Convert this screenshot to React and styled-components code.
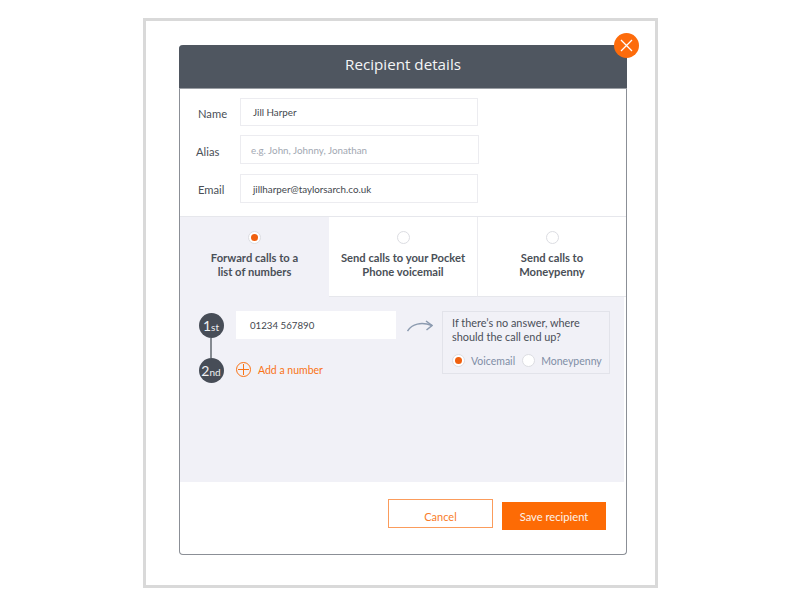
import React from "react";
import styled, { createGlobalStyle } from "styled-components";

const Global = createGlobalStyle`
  html, body { margin: 0; padding: 0; background: #fff; }
  body { font-family: Lato, "Open Sans", sans-serif; color: #4a4f57; }
`;
const Frame = styled.div`
  box-sizing: border-box; width: 515px; height: 570px; margin: 18px 0 0 143px;
  border: 3px solid #d9d9d9; padding: 24px 30px 0 33px; background: #fff;
`;
const Modal = styled.div`
  position: relative; box-sizing: border-box; width: 448px; height: 510px;
  border: 1px solid #8b8f96; border-top: 0; border-radius: 4px; background: #fff;
  display: flex; flex-direction: column;
`;
const Header = styled.div`
  height: 43px; margin: 0 -1px; background: #4f5660; border-radius: 4px 0 0 0; color: #f4f5f6;
  font: 400 15.2px/39px "Open Sans", sans-serif; text-align: center;
  border-bottom: 1px solid #9a9ea4; box-sizing: content-box;
`;
const Close = styled.div`
  position: absolute; right: -13px; top: -12px; width: 25px; height: 25px; border-radius: 50%;
  background: #fd6b0b; display: flex; align-items: center; justify-content: center;
`;
const Form = styled.div`
  height: 127px; padding-top: 9px; box-sizing: border-box; display: flex; flex-direction: column;
`;
const Row = styled.div`
  display: flex; align-items: center; margin-bottom: ${p => p.$gap}px;
`;
const Label = styled.div`
  width: ${p => p.$w}px; padding: ${p => p.$t}px 0 0 ${p => p.$l}px; box-sizing: border-box; font-size: 11.2px; color: #4a4f57;
`;
const Input = styled.div`
  box-sizing: border-box; width: ${p => p.$w}px; height: ${p => p.$h}px; border: 1px solid ${p => p.$line || "#ececf0"}; background: #fff;
  padding-left: ${p => p.$pad}px; display: flex; align-items: center; font-size: ${p => p.$size || 9.8}px;
  color: ${p => (p.$ph ? "#a2a8b2" : "#43474e")};
`;
const Tabs = styled.div`
  display: flex; height: 81px; border-top: 1px solid #e6e7ec; box-sizing: border-box;
`;
const Tab = styled.div`
  box-sizing: border-box; width: ${p => p.$w}px; padding-top: 14px; display: flex; flex-direction: column; align-items: center;
  background: ${p => (p.$on ? "#f1f1f7" : "#fff")};
  border-right: ${p => (p.$div ? "1px solid #ececf0" : "0")};
  border-bottom: ${p => (p.$on ? "0" : "1px solid #e6e7ec")};
`;
const Radio = styled.div`
  box-sizing: border-box; width: ${p => p.$s}px; height: ${p => p.$s}px; border-radius: 50%; flex: none;
  border: 1px solid #dcdde2; background: #fff; display: flex; align-items: center; justify-content: center;
  &::after {
    content: ""; display: ${p => (p.$on ? "block" : "none")}; width: 7px; height: 7px; border-radius: 50%; background: #f0600f;
  }
`;
const TabText = styled.div`
  margin-top: 7px; font-size: 11.2px; line-height: 14px; font-weight: 700; text-align: center; color: #4a4f57;
`;
const Panel = styled.div`
  height: 185px; background: #f1f1f7; padding: 16px 0 0 18px; box-sizing: border-box; display: flex; margin-right: 2px;
`;
const Steps = styled.div`
  width: 26px; display: flex; flex-direction: column; align-items: center; flex: none;
`;
const Step = styled.div`
  box-sizing: border-box; width: 25px; height: 25px; border-radius: 50%; background: #474d57; color: #eef0f2;
  font-size: 14px; font-weight: 400; display: flex; align-items: baseline; justify-content: center; line-height: 25px;
  small { font-size: 10px; }
`;
const Line = styled.div`
  width: 2px; height: 20px; background: #858a91;
`;
const Numbers = styled.div`
  margin-left: 12px; width: 160px; margin-top: -2px; display: flex; flex-direction: column;
`;
const AddRow = styled.div`
  display: flex; align-items: center; gap: 7px; margin-top: 23px; font-size: 10.5px; color: #f97316;
`;
const Arrow = styled.svg`
  flex: none; margin: 7px 9px 0 11px;
`;
const Box = styled.div`
  box-sizing: border-box; width: 168px; height: 63px; margin-top: -2px; border: 1px solid #e2e3ea; padding: 4px 0 0 9px;
`;
const Question = styled.div`
  font-size: 10.9px; line-height: 14px; color: #4a4f57;
`;
const Options = styled.div`
  display: flex; align-items: center; margin-top: 10px; font-size: 10.5px; color: #7f8ea6;
`;
const Opt = styled.span`
  margin: 0 7px 0 6px;
`;
const Footer = styled.div`
  flex: 1; display: flex; align-items: flex-start; padding: 17px 0 0 208px; box-sizing: border-box;
`;
const Cancel = styled.div`
  box-sizing: border-box; width: 105px; height: 29px; border: 1px solid #fb9c5c; color: #f97c2a; font-size: 11px;
  display: flex; align-items: center; justify-content: center; padding-top: 6px;
`;
const Save = styled.div`
  width: 104px; height: 28px; margin: 3px 0 0 9px; background: #fd6b05; color: #fbf3ec; font-size: 11.2px;
  display: flex; align-items: center; justify-content: center;
`;

export default function App() {
  return (
    <>
      <Global />
      <Frame>
        <Modal>
          <Header>Recipient details</Header>
          <Close>
            <svg width="13" height="13" viewBox="0 0 13 13" fill="none" stroke="#fff" strokeWidth="1.3">
              <path d="M1 1l11 11M12 1L1 12" />
            </svg>
          </Close>
          <Form>
            <Row $gap={9}><Label $w={60} $l={18} $t={2}>Name</Label><Input $w={238} $h={28} $pad={12}>Jill Harper</Input></Row>
            <Row $gap={10}><Label $w={60} $l={16} $t={3}>Alias</Label><Input $w={239} $h={29} $pad={10} $ph>e.g. John, Johnny, Jonathan</Input></Row>
            <Row $gap={0}><Label $w={60} $l={18} $t={2}>Email</Label><Input $w={238} $h={29} $pad={12}>jillharper@taylorsarch.co.uk</Input></Row>
          </Form>
          <Tabs>
            <Tab $on $w={149}><Radio $s={13} $on /><TabText>Forward calls to a<br />list of numbers</TabText></Tab>
            <Tab $div $w={149}><Radio $s={13} /><TabText>Send calls to your Pocket<br />Phone voicemail</TabText></Tab>
            <Tab $w={148}><Radio $s={13} /><TabText>Send calls to<br />Moneypenny</TabText></Tab>
          </Tabs>
          <Panel>
            <Steps>
              <Step>1<small>st</small></Step>
              <Line />
              <Step>2<small>nd</small></Step>
            </Steps>
            <Numbers>
              <Input $w={160} $h={28} $pad={13} $size={9.7} $line="#fff">01234 567890</Input>
              <AddRow>
                <svg width="15" height="15" viewBox="0 0 15 15" fill="none" stroke="#f97316" strokeWidth="1">
                  <circle cx="7.5" cy="7.5" r="7" />
                  <path d="M7.5 2v11M2 7.5h11" />
                </svg>
                Add a number
              </AddRow>
            </Numbers>
            <Arrow width="26" height="14" viewBox="0 0 26 14" fill="none" stroke="#8c9bb0" strokeWidth="1.5">
              <path d="M0.5 11C5 4 14 1.5 25 5.5" />
              <path d="M19 1l6 4.5L19.5 10" />
            </Arrow>
            <Box>
              <Question>If there’s no answer, where<br />should the call end up?</Question>
              <Options>
                <Radio $s={13} $on /><Opt>Voicemail</Opt>
                <Radio $s={13} /><Opt>Moneypenny</Opt>
              </Options>
            </Box>
          </Panel>
          <Footer>
            <Cancel>Cancel</Cancel>
            <Save>Save recipient</Save>
          </Footer>
        </Modal>
      </Frame>
    </>
  );
}
